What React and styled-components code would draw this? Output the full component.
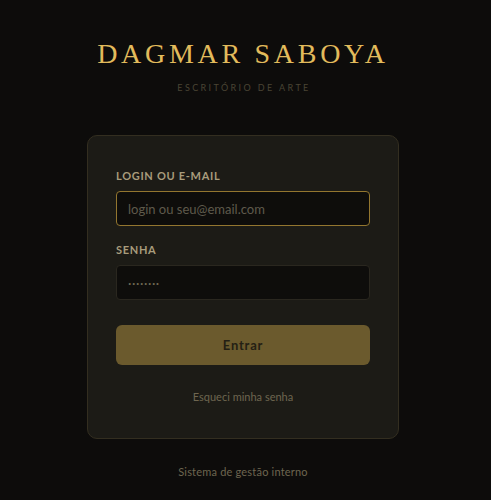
import React from "react";
import styled, { createGlobalStyle } from "styled-components";

const GlobalStyle = createGlobalStyle`
  html, body {
    margin: 0;
    padding: 0;
    background: #0d0c0b;
  }
  * { box-sizing: border-box; }
`;

const Page = styled.div`
  min-height: 500px;
  background: #0d0c0b;
  display: flex;
  flex-direction: column;
  align-items: center;
  padding-top: 38px;
  padding-right: 5px;
  font-family: "Lato", "Noto Sans", sans-serif;
`;

const Brand = styled.header`
  display: flex;
  flex-direction: column;
  align-items: center;
  margin-bottom: 41px;
`;

const Title = styled.h1`
  margin: 0;
  font-family: "Liberation Serif", "DejaVu Serif", serif;
  font-weight: 400;
  font-size: 28px;
  line-height: 32px;
  letter-spacing: 3.7px;
  color: #e2bb5c;
`;

const Subtitle = styled.p`
  margin: 12px 0 0;
  font-size: 9px;
  line-height: 12px;
  letter-spacing: 2.4px;
  padding-left: 2px;
  color: #4a4434;
`;

const Card = styled.form`
  width: 312px;
  background: #1c1b16;
  border: 1px solid #332e20;
  border-radius: 10px;
  padding: 33px 28px 34px;
  display: flex;
  flex-direction: column;
`;

const Field = styled.label`
  display: flex;
  flex-direction: column;
  gap: 8px;
  margin-bottom: ${(p) => p.$gap || 0}px;
`;

const Label = styled.span`
  font-size: 11px;
  line-height: 14px;
  font-weight: 700;
  letter-spacing: 0.7px;
  color: #a89c7c;
  text-transform: uppercase;
`;

const Input = styled.input`
  width: 100%;
  height: 35px;
  padding: 0 11px;
  background: #0e0d0b;
  border: 1px solid ${(p) => (p.$focused ? "#93762f" : "#2a271f")};
  border-radius: 4px;
  font-family: inherit;
  font-size: 13px;
  color: #c9bd9e;
  outline: none;

  &::placeholder {
    color: ${(p) => (p.$dots ? "#6e6753" : "#5f5a4b")};
    letter-spacing: ${(p) => (p.$dots ? "0.6px" : "0")};
  }
`;

const Button = styled.button`
  margin-top: 25px;
  height: 40px;
  border: none;
  border-radius: 6px;
  background: #6b5a2d;
  color: #241f14;
  font-family: inherit;
  font-size: 13px;
  font-weight: 700;
  letter-spacing: 0.8px;
  cursor: pointer;
`;

const Forgot = styled.a`
  margin-top: 25px;
  align-self: center;
  font-size: 11px;
  line-height: 14px;
  color: #6e6650;
  text-decoration: none;
`;

const Footer = styled.p`
  margin: 26px 0 0;
  font-size: 11px;
  line-height: 14px;
  letter-spacing: 0.2px;
  color: #6e6650;
`;

export default function App() {
  return (
    <>
      <GlobalStyle />
      <Page>
        <Brand>
          <Title>DAGMAR SABOYA</Title>
          <Subtitle>ESCRITÓRIO DE ARTE</Subtitle>
        </Brand>
        <Card onSubmit={(e) => e.preventDefault()}>
          <Field $gap={17}>
            <Label>Login ou e-mail</Label>
            <Input $focused placeholder="login ou seu@email.com" />
          </Field>
          <Field>
            <Label>Senha</Label>
            <Input $dots type="password" placeholder="········" />
          </Field>
          <Button type="submit">Entrar</Button>
          <Forgot href="#">Esqueci minha senha</Forgot>
        </Card>
        <Footer>Sistema de gestão interno</Footer>
      </Page>
    </>
  );
}
